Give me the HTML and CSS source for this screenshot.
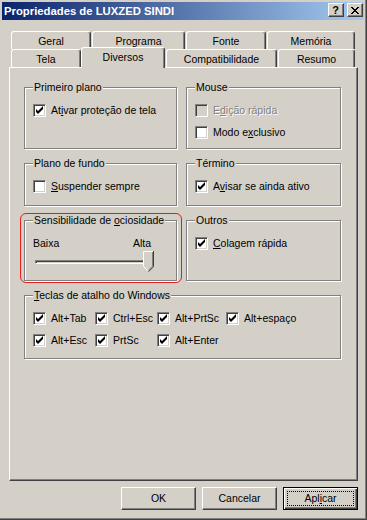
FILE: index.html
```html
<!DOCTYPE html>
<html lang="pt">
<head>
<meta charset="utf-8">
<title>Propriedades de LUXZED SINDI</title>
<link rel="stylesheet" href="styles.css">
</head>
<body>
<div class="window">
  <div class="titlebar">
    <span class="title">Propriedades de LUXZED SINDI</span>
    <div class="caption-buttons">
      <span class="cap-btn help">?</span>
      <span class="cap-btn close"><svg width="8" height="7" viewBox="0 0 8 7" shape-rendering="crispEdges"><path d="M0 0h2v1h-2z M6 0h2v1h-2z M1 1h2v1h-2z M5 1h2v1h-2z M2 2h4v1h-4z M3 3h2v1h-2z M2 4h4v1h-4z M1 5h2v1h-2z M5 5h2v1h-2z M0 6h2v1h-2z M6 6h2v1h-2z" fill="#000"/></svg></span>
    </div>
  </div>
  <div class="client">
    <div class="tab-row back">
      <div class="tab t-geral">Geral</div>
      <div class="tab t-programa">Programa</div>
      <div class="tab t-fonte">Fonte</div>
      <div class="tab t-memoria">Memória</div>
    </div>
    <div class="tab-row front">
      <div class="tab t-tela">Tela</div>
      <div class="tab t-diversos selected">Diversos</div>
      <div class="tab t-compat">Compatibilidade</div>
      <div class="tab t-resumo">Resumo</div>
    </div>
    <div class="panel">
      <div class="groups">
        <div class="group">
          <div class="legend">Primeiro plano</div>
          <div class="items">
            <div class="check"><span class="box on"><svg width="11" height="11" viewBox="0 0 11 11"><polygon points="2,4 4,6 9,1 9,4 4,9 2,7" fill="#000"/></svg></span><span>At<u>i</u>var proteção de tela</span></div>
          </div>
        </div>
        <div class="group">
          <div class="legend">Mouse</div>
          <div class="items">
            <div class="check disabled"><span class="box"></span><span>E<u>d</u>ição rápida</span></div>
            <div class="check"><span class="box"></span><span>Modo e<u>x</u>clusivo</span></div>
          </div>
        </div>
        <div class="group">
          <div class="legend">Plano de fundo</div>
          <div class="items">
            <div class="check"><span class="box"></span><span><u>S</u>uspender sempre</span></div>
          </div>
        </div>
        <div class="group">
          <div class="legend">Término</div>
          <div class="items">
            <div class="check"><span class="box on"><svg width="11" height="11" viewBox="0 0 11 11"><polygon points="2,4 4,6 9,1 9,4 4,9 2,7" fill="#000"/></svg></span><span>A<u>v</u>isar se ainda ativo</span></div>
          </div>
        </div>
        <div class="group marked">
          <div class="legend">Sensibilidade de <u>o</u>ciosidade</div>
          <div class="slider-labels"><span>Baixa</span><span>Alta</span></div>
          <div class="slider">
            <div class="track"></div>
            <svg class="thumb" width="11" height="21" viewBox="0 0 11 21">
              <polygon points="0,0 11,0 11,16 5.5,21 0,16" fill="#d4d0c8"/>
              <path d="M0.5 15.5 V0.5 H10" fill="none" stroke="#fff"/>
              <path d="M0.5 15.5 L5 20" fill="none" stroke="#fff"/>
              <path d="M10.5 0 V15.7 L5.5 20.7" fill="none" stroke="#404040"/>
              <path d="M9.5 1 V15.3 L5.3 19.5" fill="none" stroke="#808080"/>
            </svg>
          </div>
        </div>
        <div class="group">
          <div class="legend">Outros</div>
          <div class="items">
            <div class="check"><span class="box on"><svg width="11" height="11" viewBox="0 0 11 11"><polygon points="2,4 4,6 9,1 9,4 4,9 2,7" fill="#000"/></svg></span><span><u>C</u>olagem rápida</span></div>
          </div>
        </div>
        <div class="group wide">
          <div class="legend"><u>T</u>eclas de atalho do Windows</div>
          <div class="keys">
            <div class="check"><span class="box on"><svg width="11" height="11" viewBox="0 0 11 11"><polygon points="2,4 4,6 9,1 9,4 4,9 2,7" fill="#000"/></svg></span><span>Alt+Tab</span></div>
            <div class="check"><span class="box on"><svg width="11" height="11" viewBox="0 0 11 11"><polygon points="2,4 4,6 9,1 9,4 4,9 2,7" fill="#000"/></svg></span><span>Ctrl+Esc</span></div>
            <div class="check"><span class="box on"><svg width="11" height="11" viewBox="0 0 11 11"><polygon points="2,4 4,6 9,1 9,4 4,9 2,7" fill="#000"/></svg></span><span>Alt+PrtSc</span></div>
            <div class="check"><span class="box on"><svg width="11" height="11" viewBox="0 0 11 11"><polygon points="2,4 4,6 9,1 9,4 4,9 2,7" fill="#000"/></svg></span><span>Alt+espaço</span></div>
            <div class="check"><span class="box on"><svg width="11" height="11" viewBox="0 0 11 11"><polygon points="2,4 4,6 9,1 9,4 4,9 2,7" fill="#000"/></svg></span><span>Alt+Esc</span></div>
            <div class="check"><span class="box on"><svg width="11" height="11" viewBox="0 0 11 11"><polygon points="2,4 4,6 9,1 9,4 4,9 2,7" fill="#000"/></svg></span><span>PrtSc</span></div>
            <div class="check"><span class="box on"><svg width="11" height="11" viewBox="0 0 11 11"><polygon points="2,4 4,6 9,1 9,4 4,9 2,7" fill="#000"/></svg></span><span>Alt+Enter</span></div>
          </div>
        </div>
      </div>
    </div>
    <div class="buttons">
      <div class="btn">OK</div>
      <div class="btn">Cancelar</div>
      <div class="btn default">Apl<u>i</u>car</div>
    </div>
  </div>
</div>
</body>
</html>
```

FILE: styles.css
```css
* { box-sizing: border-box; }
html, body { margin: 0; padding: 0; }
body {
  width: 367px;
  height: 520px;
  overflow: hidden;
  background: #d4d0c8;
  font-family: "Liberation Sans", Arial, sans-serif;
  font-size: 10.5px;
  color: #000;
}
.window {
  width: 367px;
  height: 520px;
  padding: 2px 2px 0 2px;
  border-right: 1px solid #404040;
  border-bottom: 1px solid #404040;
  box-shadow: inset -1px -1px 0 #808080;
  display: flex;
  flex-direction: column;
}
.titlebar {
  height: 18px;
  display: flex;
  align-items: flex-start;
  padding-left: 2px;
  background: linear-gradient(to right, #0a246a, #a6caf0);
}
.title {
  color: #fff;
  font-weight: bold;
  font-size: 11.3px;
  line-height: 18px;
  white-space: nowrap;
}
.caption-buttons {
  margin-left: auto;
  margin-right: 1px;
  margin-top: 1px;
  display: flex;
  gap: 3px;
}
.cap-btn {
  width: 16px;
  height: 14px;
  background: #d4d0c8;
  border: 1px solid;
  border-color: #fff #404040 #404040 #fff;
  box-shadow: inset -1px -1px 0 #808080;
  display: flex;
  align-items: center;
  justify-content: center;
}
.cap-btn.help {
  font-weight: bold;
  font-size: 11px;
  line-height: 12px;
  padding-right: 1px;
}
.cap-btn.close svg { display: block; margin-top: 0; }

.client {
  flex: 1;
  display: flex;
  flex-direction: column;
}
.tab-row {
  display: flex;
  height: 18px;
  padding-left: 9px;
  align-items: flex-end;
}
.tab-row.back { margin-top: 11px; gap: 1px; }
.tab {
  height: 18px;
  padding-top: 1px;
  line-height: 16px;
  text-align: center;
  white-space: nowrap;
  background: #d4d0c8;
  border-top: 1px solid #fff;
  border-left: 1px solid #fff;
  border-right: 1px solid #404040;
  border-radius: 3px 3px 0 0;
  box-shadow: inset -1px 0 0 #808080;
}
.t-geral { width: 80px; }
.t-programa { width: 93px; }
.t-fonte { width: 80px; }
.t-memoria { width: 88px; }
.t-tela { width: 70px; }
.t-diversos { width: 84px; margin-right: 1px; }
.t-compat { width: 111px; margin-right: 1px; }
.t-resumo { width: 77px; }
.tab.selected {
  height: 21px;
  margin-bottom: -1px;
  position: relative;
  z-index: 1;
}

.panel {
  margin-left: 7px;
  width: 349px;
  height: 414px;
  border-top: 1px solid #fff;
  border-left: 1px solid #fff;
  border-right: 1px solid #404040;
  border-bottom: 1px solid #404040;
  box-shadow: inset -1px -1px 0 #808080;
  padding: 19px 0 0 14px;
}
.groups {
  display: grid;
  grid-template-columns: 153px 155px;
  grid-template-rows: 62px 43px 61px 64px;
  column-gap: 9px;
  row-gap: 14px;
}
.group {
  border: 1px solid #808080;
  box-shadow: inset 1px 1px 0 #fff, 1px 1px 0 #fff;
  padding: 0 4px 0 8px;
}
.group.wide { grid-column: 1 / 3; }
.legend {
  width: fit-content;
  margin-top: -7px;
  padding: 0 1px;
  height: 13px;
  line-height: 13px;
  background: #d4d0c8;
  white-space: nowrap;
}
.items {
  margin-top: 10px;
  display: flex;
  flex-direction: column;
  gap: 9px;
}
.check {
  display: flex;
  align-items: center;
  gap: 5px;
  height: 13px;
  line-height: 13px;
  white-space: nowrap;
}
.box {
  flex: none;
  width: 13px;
  height: 13px;
  background: #fff;
  border: 1px solid;
  border-color: #808080 #fff #fff #808080;
  box-shadow: inset 1px 1px 0 #404040, inset -1px -1px 0 #d4d0c8;
}
.box svg { display: block; }
.check.disabled .box { background: #d4d0c8; }
.check.disabled span:last-child {
  color: #808080;
  text-shadow: 1px 1px 0 #fff;
}

.group.marked { position: relative; }
.group.marked::after {
  content: "";
  position: absolute;
  left: -5px;
  right: -6px;
  top: -8px;
  bottom: -3px;
  border: 1px solid #e41e1e;
  border-radius: 6px;
  pointer-events: none;
}
.slider-labels {
  margin-top: 10px;
  width: 118px;
  height: 13px;
  line-height: 13px;
  display: flex;
  justify-content: space-between;
}
.slider {
  margin-top: 1px;
  width: 121px;
  height: 21px;
  display: flex;
  align-items: center;
}
.track {
  flex: 1;
  height: 4px;
  margin-left: 2px;
  margin-right: -3px;
  border-top: 1px solid #808080;
  border-left: 1px solid #808080;
  border-bottom: 1px solid #fff;
  border-right: 1px solid #fff;
  box-shadow: inset 1px 1px 0 #404040;
}
.thumb { display: block; flex: none; position: relative; }

.keys {
  margin-top: 10px;
  display: grid;
  grid-template-columns: 62px 62px 69px auto;
  row-gap: 9px;
}

.buttons {
  margin-top: 6px;
  width: 356px;
  display: flex;
  justify-content: flex-end;
  gap: 6px;
}
.btn {
  width: 75px;
  height: 23px;
  background: #d4d0c8;
  border: 1px solid;
  border-color: #fff #404040 #404040 #fff;
  box-shadow: inset -1px -1px 0 #808080;
  display: flex;
  align-items: center;
  justify-content: center;
  line-height: 13px;
}
.btn.default {
  position: relative;
  border-color: #000;
  box-shadow: inset 1px 1px 0 #fff, inset -1px -1px 0 #404040, inset -2px -2px 0 #808080;
}
.btn.default::after {
  content: "";
  position: absolute;
  left: 3px;
  right: 3px;
  top: 3px;
  bottom: 3px;
  border: 1px dotted #000;
}
```
